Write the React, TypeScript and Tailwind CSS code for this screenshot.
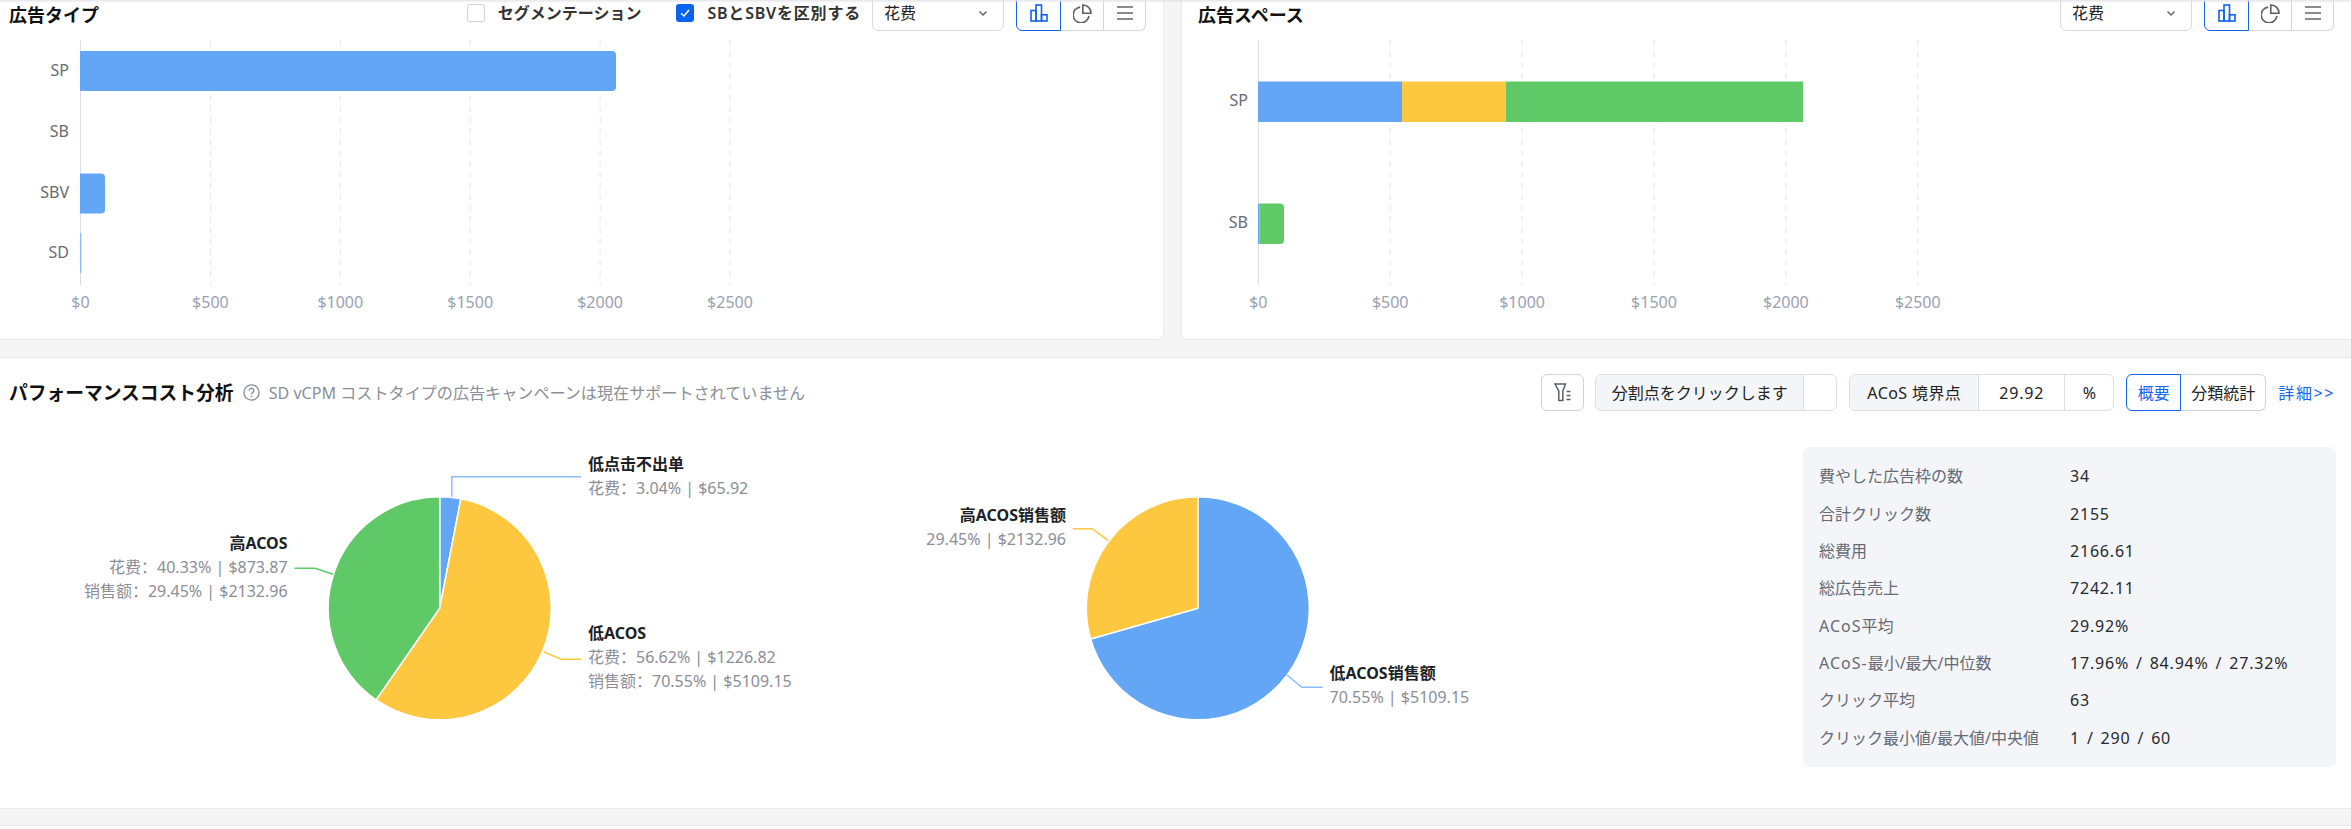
import type { ReactNode } from "react";

const BLUE = "#63a6f5";
const YELLOW = "#fec740";
const GREEN = "#60c967";
const CJK = '"Noto Sans", "Noto Sans CJK JP", sans-serif';
const CJK_SC = '"Noto Sans", "Noto Sans CJK SC", sans-serif';

function BarIcon() {
  return (
    <svg width="18" height="18" viewBox="0 0 18 18" fill="none" stroke="#0f62f0" strokeWidth="1.6">
      <rect x="1" y="6.5" width="5" height="10.5" />
      <rect x="6" y="1" width="5.5" height="16" />
      <rect x="11.5" y="10.8" width="5.5" height="6.2" />
    </svg>
  );
}

function PieIcon() {
  return (
    <svg width="19" height="19" viewBox="0 0 19 19" fill="none" stroke="#5c5f66" strokeWidth="1.6">
      <path d="M7.2 3.1a7.9 7.9 0 1 0 8.7 8.7" />
      <path d="M9.8 1a8 8 0 0 1 8.2 8.2H9.8z" />
    </svg>
  );
}

function MenuIcon() {
  return (
    <svg width="16" height="14" viewBox="0 0 16 14" stroke="#666" strokeWidth="1.7">
      <path d="M0 1h16M0 7h16M0 13h16" />
    </svg>
  );
}

function ChartSwitch() {
  return (
    <div className="flex h-[37px] w-[130px] shrink-0">
      <div className="flex w-[45px] items-center justify-center rounded-l-[6px] border border-[#1467ec] pt-[1px]">
        <BarIcon />
      </div>
      <div className="flex w-[43px] items-center justify-center border-y border-r border-[#d3d5da] pt-[1px]">
        <PieIcon />
      </div>
      <div className="flex w-[42px] items-center justify-center rounded-r-[6px] border-y border-r border-[#d3d5da] pt-[1px]">
        <MenuIcon />
      </div>
    </div>
  );
}

function MetricSelect() {
  return (
    <div
      className="flex h-[37px] w-[132px] shrink-0 items-center justify-between rounded-[6px] border border-[#d9dbe0] pl-[11px] pr-[14px] text-[16px] text-[#222]"
      style={{ fontFamily: CJK_SC }}
    >
      <span>花费</span>
      <svg width="12" height="12" viewBox="0 0 12 12" fill="none" stroke="#666" strokeWidth="1.5">
        <path d="M2.5 4.5 6 8l3.5-3.5" />
      </svg>
    </div>
  );
}

function Check({ on, label, className }: { on?: boolean; label: string; className?: string }) {
  return (
    <div className={`flex items-center gap-[13px] text-[16px] font-semibold text-[#333] ${className ?? ""}`}>
      <span
        className={
          on
            ? "flex h-[18px] w-[18px] items-center justify-center rounded-[3px] bg-[#0a62f0]"
            : "h-[18px] w-[18px] rounded-[3px] border border-[#cfd2d8] bg-white"
        }
      >
        {on && (
          <svg width="12" height="12" viewBox="0 0 12 12" fill="none" stroke="#fff" strokeWidth="1.5">
            <path d="M2 6.2 5 9l5-6" />
          </svg>
        )}
      </span>
      {label}
    </div>
  );
}

function Ticks({ x0, step, top, bottom }: { x0: number; step: number; top: number; bottom: number }) {
  return (
    <>
      <line x1={x0} x2={x0} y1={top} y2={bottom} stroke="#d9dde6" />
      {[1, 2, 3, 4, 5].map((i) => (
        <line
          key={i}
          x1={x0 + i * step}
          x2={x0 + i * step}
          y1={top}
          y2={bottom}
          stroke="#e3e6ee"
          strokeDasharray="6 5"
        />
      ))}
      {["$0", "$500", "$1000", "$1500", "$2000", "$2500"].map((t, i) => (
        <text key={t} x={x0 + i * step} y={bottom + 23} textAnchor="middle" fontSize="16" fill="#9aa1b0">
          {t}
        </text>
      ))}
    </>
  );
}

function AdTypeChart() {
  return (
    <svg width="800" height="300" className="mt-[9px] block" style={{ fontFamily: CJK }}>
      <Ticks x0={80.5} step={129.9} top={0} bottom={245} />
      <path d="M80 11h532a4 4 0 0 1 4 4v32a4 4 0 0 1-4 4H80z" fill={BLUE} />
      <path d="M80 133.5h21a4 4 0 0 1 4 4v32a4 4 0 0 1-4 4H80z" fill={BLUE} />
      <rect x="80" y="193" width="1.5" height="40" fill={BLUE} opacity="0.6" />
      {[
        ["SP", 36],
        ["SB", 97],
        ["SBV", 158],
        ["SD", 218],
      ].map(([t, y]) => (
        <text key={t} x="69" y={y} textAnchor="end" fontSize="16" fill="#666a73">
          {t}
        </text>
      ))}
    </svg>
  );
}

function AdSpaceChart() {
  return (
    <svg width="800" height="300" className="mt-[9px] block" style={{ fontFamily: CJK }}>
      <Ticks x0={76.3} step={131.9} top={0} bottom={245} />
      <rect x="76" y="41.5" width="144" height="40.5" fill={BLUE} />
      <rect x="220" y="41.5" width="104" height="40.5" fill={YELLOW} />
      <rect x="324" y="41.5" width="297" height="40.5" fill={GREEN} />
      <rect x="76" y="163.5" width="1.5" height="40.5" fill={BLUE} />
      <path d="M77.5 163.5H98a4 4 0 0 1 4 4v32.5a4 4 0 0 1-4 4H77.5z" fill={GREEN} />
      {[
        ["SP", 66],
        ["SB", 188],
      ].map(([t, y]) => (
        <text key={t} x="66" y={y} textAnchor="end" fontSize="16" fill="#666a73">
          {t}
        </text>
      ))}
    </svg>
  );
}

function wedge(cx: number, cy: number, r: number, from: number, to: number) {
  const pt = (p: number) => {
    const a = (p / 100) * Math.PI * 2;
    return `${(cx + r * Math.sin(a)).toFixed(2)} ${(cy - r * Math.cos(a)).toFixed(2)}`;
  };
  const large = to - from > 50 ? 1 : 0;
  return `M${cx} ${cy}L${pt(from)}A${r} ${r} 0 ${large} 1 ${pt(to)}Z`;
}

function Label({ x, y, end, title, lines }: { x: number; y: number; end?: boolean; title: string; lines: string[] }) {
  const anchor = end ? "end" : "start";
  return (
    <>
      <text x={x} y={y} textAnchor={anchor} fontSize="16" fontWeight="700" fill="#1c1f26">
        {title}
      </text>
      {lines.map((l, i) => (
        <text key={l} x={x} y={y + 24 * (i + 1)} textAnchor={anchor} fontSize="16" fill="#8b8e96">
          {l}
        </text>
      ))}
    </>
  );
}

// 円グラフは原点を (0, 430) に揃えて描く
function CostPies() {
  return (
    <svg width="1560" height="350" className="mt-[3px] block" style={{ fontFamily: CJK_SC }}>
      <g stroke="#fff" strokeWidth="1.5">
        <path d={wedge(439.7, 178.3, 111.5, 0, 3.04)} fill={BLUE} />
        <path d={wedge(439.7, 178.3, 111.5, 3.04, 59.66)} fill={YELLOW} />
        <path d={wedge(439.7, 178.3, 111.5, 59.66, 100)} fill={GREEN} />
        <path d={wedge(1197.8, 178.3, 111.5, 0, 70.55)} fill={BLUE} />
        <path d={wedge(1197.8, 178.3, 111.5, 70.55, 100)} fill={YELLOW} />
      </g>
      <g fill="none" strokeWidth="1.5">
        <path d="M451.8 66.7V46.7H581" stroke="#8dbdf7" />
        <path d="M294.5 138.3H315L333 144.3" stroke={GREEN} />
        <path d="M543.6 221.7 561 229.3H581" stroke={YELLOW} />
        <path d="M1072.8 98.7H1092L1108.5 110.7" stroke={YELLOW} />
        <path d="M1287 245 1301.8 257.3H1322.8" stroke="#8dbdf7" />
      </g>
      <Label x={588} y={40} title="低点击不出单" lines={["花费：3.04% | $65.92"]} />
      <Label x={287.6} y={119} end title="高ACOS" lines={["花费：40.33% | $873.87", "销售额：29.45% | $2132.96"]} />
      <Label x={588} y={209} title="低ACOS" lines={["花费：56.62% | $1226.82", "销售额：70.55% | $5109.15"]} />
      <Label x={1066} y={91} end title="高ACOS销售额" lines={["29.45% | $2132.96"]} />
      <Label x={1329.5} y={249} title="低ACOS销售额" lines={["70.55% | $5109.15"]} />
    </svg>
  );
}

const stats: [ReactNode, string][] = [
  ["費やした広告枠の数", "34"],
  ["合計クリック数", "2155"],
  ["総費用", "2166.61"],
  ["総広告売上", "7242.11"],
  [<><span className="tracking-[1px]">ACoS</span>平均</>, "29.92%"],
  [<><span className="tracking-[1px]">ACoS-</span>最小/最大/中位数</>, "17.96% / 84.94% / 27.32%"],
  ["クリック平均", "63"],
  ["クリック最小値/最大値/中央値", "1 / 290 / 60"],
];

function Cell({ children, className }: { children?: ReactNode; className?: string }) {
  return <div className={`flex items-center justify-center ${className ?? ""}`}>{children}</div>;
}

export default function App() {
  return (
    <div className="relative h-[829px] w-[2351px] overflow-hidden bg-[#f5f5f6]" style={{ fontFamily: CJK }}>
      <div className="pointer-events-none absolute inset-x-0 top-0 h-[3px] bg-gradient-to-b from-[#e4e5e8] to-transparent" />
      <div className="-mt-[6px] flex h-[346px] gap-[17px]">
        <section className="w-[1164px] rounded-br-[6px] border-b border-r border-[#e8e9ec] bg-white">
          <header className="flex h-[37px] items-center pr-[17px]">
            <h2 className="ml-[9px] mt-[5px] text-[18px] font-bold text-[#111]">広告タイプ</h2>
            <div className="ml-auto mr-[11px] mt-[1px] flex items-center gap-[35px]">
              <Check label="セグメンテーション" />
              <Check on label="SBとSBVを区別する" className="tracking-[0.8px]" />
            </div>
            <MetricSelect />
            <div className="ml-[12px]">
              <ChartSwitch />
            </div>
          </header>
          <AdTypeChart />
        </section>
        <section className="flex-1 rounded-bl-[6px] border-b border-l border-[#e8e9ec] bg-white">
          <header className="flex h-[37px] items-center pr-[17px]">
            <h2 className="ml-[16px] mt-[5px] text-[18px] font-bold text-[#111]">広告スペース</h2>
            <div className="ml-auto">
              <MetricSelect />
            </div>
            <div className="ml-[12px]">
              <ChartSwitch />
            </div>
          </header>
          <AdSpaceChart />
        </section>
      </div>

      <section className="mt-[17px] h-[452px] border-y border-[#e8e9ec] bg-white">
        <header className="flex h-[69px] items-center pr-[16px]">
          <h2 className="ml-[9px] mt-[1px] text-[18.75px] font-bold text-[#111]">パフォーマンスコスト分析</h2>
          <svg className="ml-[9px]" width="17" height="17" viewBox="0 0 17 17" fill="none" stroke="#8b8e96" strokeWidth="1.4">
            <circle cx="8.5" cy="8.5" r="7.6" />
            <path d="M6.2 6.6a2.3 2.3 0 1 1 3.5 2c-.8.5-1.2.9-1.2 1.9" />
            <path d="M8.5 11.8v1.4" />
          </svg>
          <span className="ml-[9px] mt-[1px] text-[16.1px] text-[#8b8e96]">
            SD vCPM コストタイプの広告キャンペーンは現在サポートされていません
          </span>
          <div className="ml-auto flex h-[37px] items-stretch text-[16px] text-[#222]">
            <Cell className="w-[43px] rounded-[6px] border border-[#cfd2d8]">
              <svg width="18" height="19" viewBox="0 0 18 19" fill="none" stroke="#5c5f66" strokeWidth="1.5">
                <path d="M1 1h10.5L8.8 8v9.5H4.8V8z" />
                <path d="M12.5 8.5h4M12.5 12.5h4M12.5 16.5h4" />
              </svg>
            </Cell>
            <div className="ml-[11px] flex w-[242px] rounded-[6px] border border-[#dcdee3]">
              <Cell className="w-[208px] rounded-l-[6px] border-r border-[#dcdee3] bg-[#f3f5f9]">分割点をクリックします</Cell>
            </div>
            <div className="ml-[12px] flex w-[265px] rounded-[6px] border border-[#dcdee3]">
              <Cell className="w-[129px] rounded-l-[6px] border-r border-[#dcdee3] bg-[#f3f5f9] tracking-[0.4px]">ACoS 境界点</Cell>
              <Cell className="w-[86px] border-r border-[#dcdee3] tracking-[0.8px]">29.92</Cell>
              <Cell className="flex-1">%</Cell>
            </div>
            <div className="ml-[12px] flex w-[140px]">
              <Cell className="w-[55px] rounded-l-[6px] border border-[#1467ec] text-[#1467ec]">概要</Cell>
              <Cell className="flex-1 rounded-r-[6px] border-y border-r border-[#cfd2d8]">分類統計</Cell>
            </div>
            <Cell className="ml-[12px] tracking-[1.6px] text-[#1467ec]">詳細&gt;&gt;</Cell>
          </div>
        </header>
        <div className="flex h-[381px] items-start justify-between pr-[15px]">
          <CostPies />
          <dl className="mt-[20px] flex h-[320px] w-[533px] shrink-0 flex-col justify-center rounded-[6px] bg-[#f4f5f9] pl-[16px] text-[16px]">
            {stats.map(([k, v], i) => (
              <div key={i} className="flex h-[37.3px] items-center">
                <dt className="w-[251px] whitespace-nowrap text-[#666a73]">{k}</dt>
                <dd className="tracking-[0.8px] text-[#26292f] [word-spacing:2px]">{v}</dd>
              </div>
            ))}
          </dl>
        </div>
      </section>
      <div className="mt-[16px] h-[4px] border-t border-[#e8e9ec] bg-white" />
    </div>
  );
}
